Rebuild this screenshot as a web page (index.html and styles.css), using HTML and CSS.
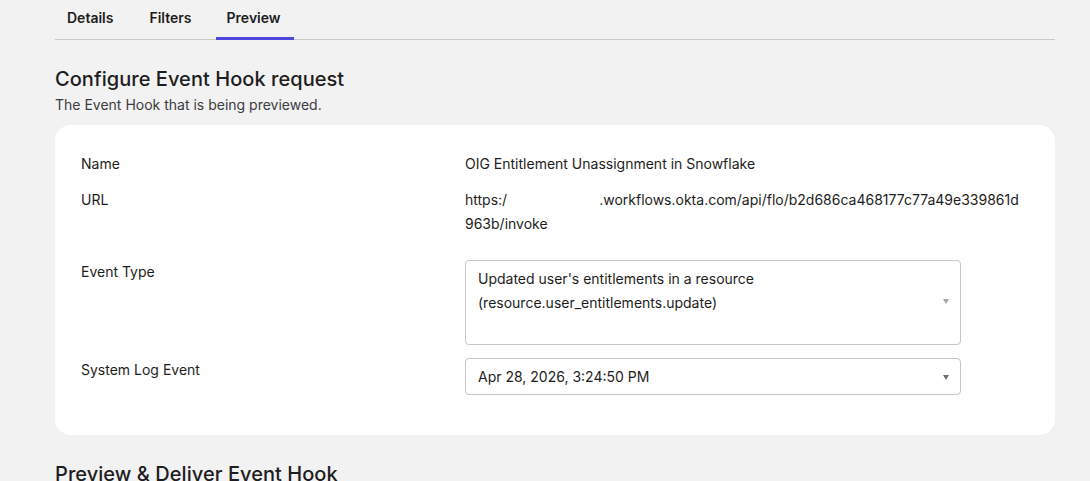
FILE: index.html
```html
<!DOCTYPE html>
<html lang="en">
<head>
  <meta charset="UTF-8" />
  <meta name="viewport" content="width=device-width, initial-scale=1.0">
  <title>Event Hook - Preview</title>
  <link rel="stylesheet" href="styles.css">
</head>
<body>
  <div class="page">
    <nav class="tabs">
      <a class="tab" href="#details">Details</a>
      <a class="tab" href="#filters">Filters</a>
      <a class="tab active" href="#preview">Preview</a>
    </nav>

    <!-- Configure request -->
    <section class="section">
      <h2 class="section-title">Configure Event Hook request</h2>
      <p class="section-desc">The Event Hook that is being previewed.</p>

      <div class="card">
        <div class="field">
          <div class="field-label">Name</div>
          <div class="field-value">OIG Entitlement Unassignment in Snowflake</div>
        </div>
        <div class="field field-url">
          <div class="field-label">URL</div>
          <div class="field-value url">https:/<span class="redacted"></span>.workflows.okta.com/api/flo/b2d686ca468177c77a49e339861d963b/invoke</div>
        </div>
        <div class="field field-select">
          <div class="field-label">Event Type</div>
          <div class="select select-tall">
            <span class="select-text">Updated user's entitlements in a resource (resource.user_entitlements.update)</span>
            <span class="caret light"></span>
          </div>
        </div>
        <div class="field field-select">
          <div class="field-label">System Log Event</div>
          <div class="select">
            <span class="select-text">Apr 28, 2026, 3:24:50 PM</span>
            <span class="caret"></span>
          </div>
        </div>
      </div>
    </section>

    <section class="section">
      <h2 class="section-title">Preview &amp; Deliver Event Hook</h2>
    </section>
  </div>
</body>
</html>
```

FILE: styles.css
```css
body {
  margin: 0;
  background: #f2f2f2;
  font-family: Inter, "Noto Sans", sans-serif;
  color: #1d1d21;
  font-size: 14px;
  line-height: 24px;
}

.page {
  width: 1000px;
  margin-left: 55px;
}

.tabs {
  display: flex;
  gap: 12px;
  height: 40px;
  border-bottom: 1px solid #c9c9cc;
  box-sizing: border-box;
}

.tab {
  padding: 6px 12px 0;
  font-weight: 600;
  font-size: 14px;
  color: #1d1d21;
  text-decoration: none;
  box-sizing: border-box;
  height: 40px;
}

.tab.active {
  border-bottom: 3px solid #4f46e0;
  padding-left: 11px;
  padding-right: 13px;
}

.section {
  margin-top: 26px;
}

.section-title {
  margin: 0;
  font-size: 20px;
  font-weight: 500;
  line-height: 26px;
  letter-spacing: 0.05px;
}

.section-desc {
  margin: 0 0 7px;
  font-size: 14px;
  color: #3c3c42;
  line-height: 26px;
}

.card {
  background: #fff;
  border-radius: 16px;
  padding: 27px 26px 40px;
}

.field {
  display: flex;
  margin-bottom: 12px;
}

.field-url {
  margin-bottom: 24px;
}

.field-select {
  margin-bottom: 13px;
}

.field:last-child {
  margin-bottom: 0;
}

.field-label {
  width: 384px;
  flex-shrink: 0;
}

.field-value {
  flex: 1;
}

.url {
  max-width: 561px;
  word-break: break-all;
}

.redacted {
  display: inline-block;
  width: 92px;
}

.select {
  position: relative;
  width: 496px;
  box-sizing: border-box;
  border: 1px solid #c5c5ca;
  border-radius: 4px;
  padding: 6px 40px 5px 12px;
  min-height: 37px;
}

.select-tall {
  height: 85px;
}

.caret {
  position: absolute;
  right: 11px;
  top: 16px;
  width: 0;
  height: 0;
  border-left: 3px solid transparent;
  border-right: 3px solid transparent;
  border-top: 5px solid #6e6e78;
}

.caret.light {
  top: 38px;
  border-top-color: #a5a5ad;
}
```
